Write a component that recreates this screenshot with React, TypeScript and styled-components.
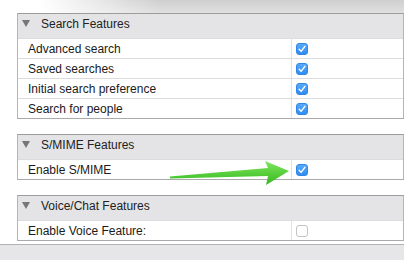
import React from 'react';
import styled, { createGlobalStyle } from 'styled-components';

type Feature = { label: string; checked: boolean };
type Group = { title: string; items: Feature[] };

const groups: Group[] = [
  {
    title: 'Search Features',
    items: [
      { label: 'Advanced search', checked: true },
      { label: 'Saved searches', checked: true },
      { label: 'Initial search preference', checked: true },
      { label: 'Search for people', checked: true },
    ],
  },
  {
    title: 'S/MIME Features',
    items: [{ label: 'Enable S/MIME', checked: true }],
  },
  {
    title: 'Voice/Chat Features',
    items: [{ label: 'Enable Voice Feature:', checked: false }],
  },
];

const GlobalStyle = createGlobalStyle`
  html, body {
    margin: 0;
    padding: 0;
    background: #fff;
  }
  body {
    font-family: "Liberation Sans", Arial, Helvetica, sans-serif;
  }
`;

const Check = ({ checked }: { checked: boolean }) => (
  <Box checked={checked}>
    {checked && (
      <svg width="12" height="12" viewBox="0 0 12 12">
        <path d="M3.2 6.3 L5.1 8.4 L8.9 3.3" fill="none" stroke="#fff" strokeWidth="1.4" strokeLinecap="round" strokeLinejoin="round" />
      </svg>
    )}
  </Box>
);

const Arrow = () => (
  <ArrowSvg width="404" height="260" viewBox="0 0 404 260">
    <defs>
      <linearGradient id="g" x1="0" y1="0" x2="0" y2="1">
        <stop offset="0" stopColor="#7fe65c" />
        <stop offset="1" stopColor="#34b81f" />
      </linearGradient>
    </defs>
    <polygon
      points="170,176.5 268,168 265,161 289,171 266,185 268,176 170,178.5"
      fill="url(#g)"
    />
  </ArrowSvg>
);

const App = () => (
  <Page>
    <GlobalStyle />
    <TopBand />
    <Content>
      {groups.map((g) => (
        <Section key={g.title}>
          <Header>
            <Triangle />
            <Title>{g.title}</Title>
          </Header>
          {g.items.map((it) => (
            <Row key={it.label}>
              <Label>{it.label}</Label>
              <Cell>
                <Check checked={it.checked} />
              </Cell>
            </Row>
          ))}
        </Section>
      ))}
    </Content>
    <BottomBand />
    <Arrow />
  </Page>
);

export default App;

const Page = styled.div`
  position: relative;
  width: 404px;
  height: 260px;
  overflow: hidden;
  display: flex;
  flex-direction: column;
  background: #fff;
`;

const TopBand = styled.div`
  height: 13px;
  flex-shrink: 0;
  background:
    linear-gradient(to right, #fff 0px, #fff 40px, rgba(255, 255, 255, 0) 160px),
    linear-gradient(#cfcfcf, #e0e0e0);
`;

const Content = styled.div`
  display: flex;
  flex-direction: column;
  gap: 15px;
  padding-left: 17px;
`;

const Section = styled.div`
  width: 387px;
  box-sizing: border-box;
  border: 1px solid #b5b5b5;
  border-top-color: #9c9c9c;
  border-bottom-color: #a9a9a9;
`;

const Header = styled.div`
  height: 24px;
  box-sizing: border-box;
  padding: 3px 0 0 4px;
  display: flex;
  align-items: flex-start;
  background: #e4e4e6;
  font-size: 12px;
  line-height: 14px;
  color: #222;
`;

const Triangle = styled.span`
  width: 0;
  height: 0;
  margin-top: 3px;
  border-left: 4px solid transparent;
  border-right: 4px solid transparent;
  border-top: 7px solid #767676;
`;

const Title = styled.span`
  margin-left: 11px;
`;

const Row = styled.div`
  display: grid;
  grid-template-columns: 274px 1fr;
  height: 20px;
  box-sizing: border-box;
  border-top: 1px solid #dcdcdc;
  &:first-of-type {
    border-top: none;
  }
`;

const Label = styled.div`
  display: flex;
  align-items: center;
  padding-left: 10px;
  border-right: 1px solid #e2e2e2;
  font-size: 12px;
  color: #1a1a1a;
`;

const Cell = styled.div`
  display: flex;
  align-items: center;
  padding-left: 4px;
`;

const Box = styled.span<{ checked: boolean }>`
  width: 12px;
  height: 12px;
  box-sizing: border-box;
  border-radius: 3px;
  display: flex;
  background: ${(p) => (p.checked ? 'linear-gradient(#58aafa, #2f8cf1)' : '#fff')};
  border: 1px solid ${(p) => (p.checked ? '#2f86e6' : '#c3c3c3')};
  svg {
    margin: -1px;
  }
`;

const BottomBand = styled.div`
  margin-top: 3px;
  flex: 1;
  background: #e6e6e8;
  border-top: 1px solid #b2b2b2;
`;

const ArrowSvg = styled.svg`
  position: absolute;
  left: 0;
  top: 0;
  pointer-events: none;
`;
